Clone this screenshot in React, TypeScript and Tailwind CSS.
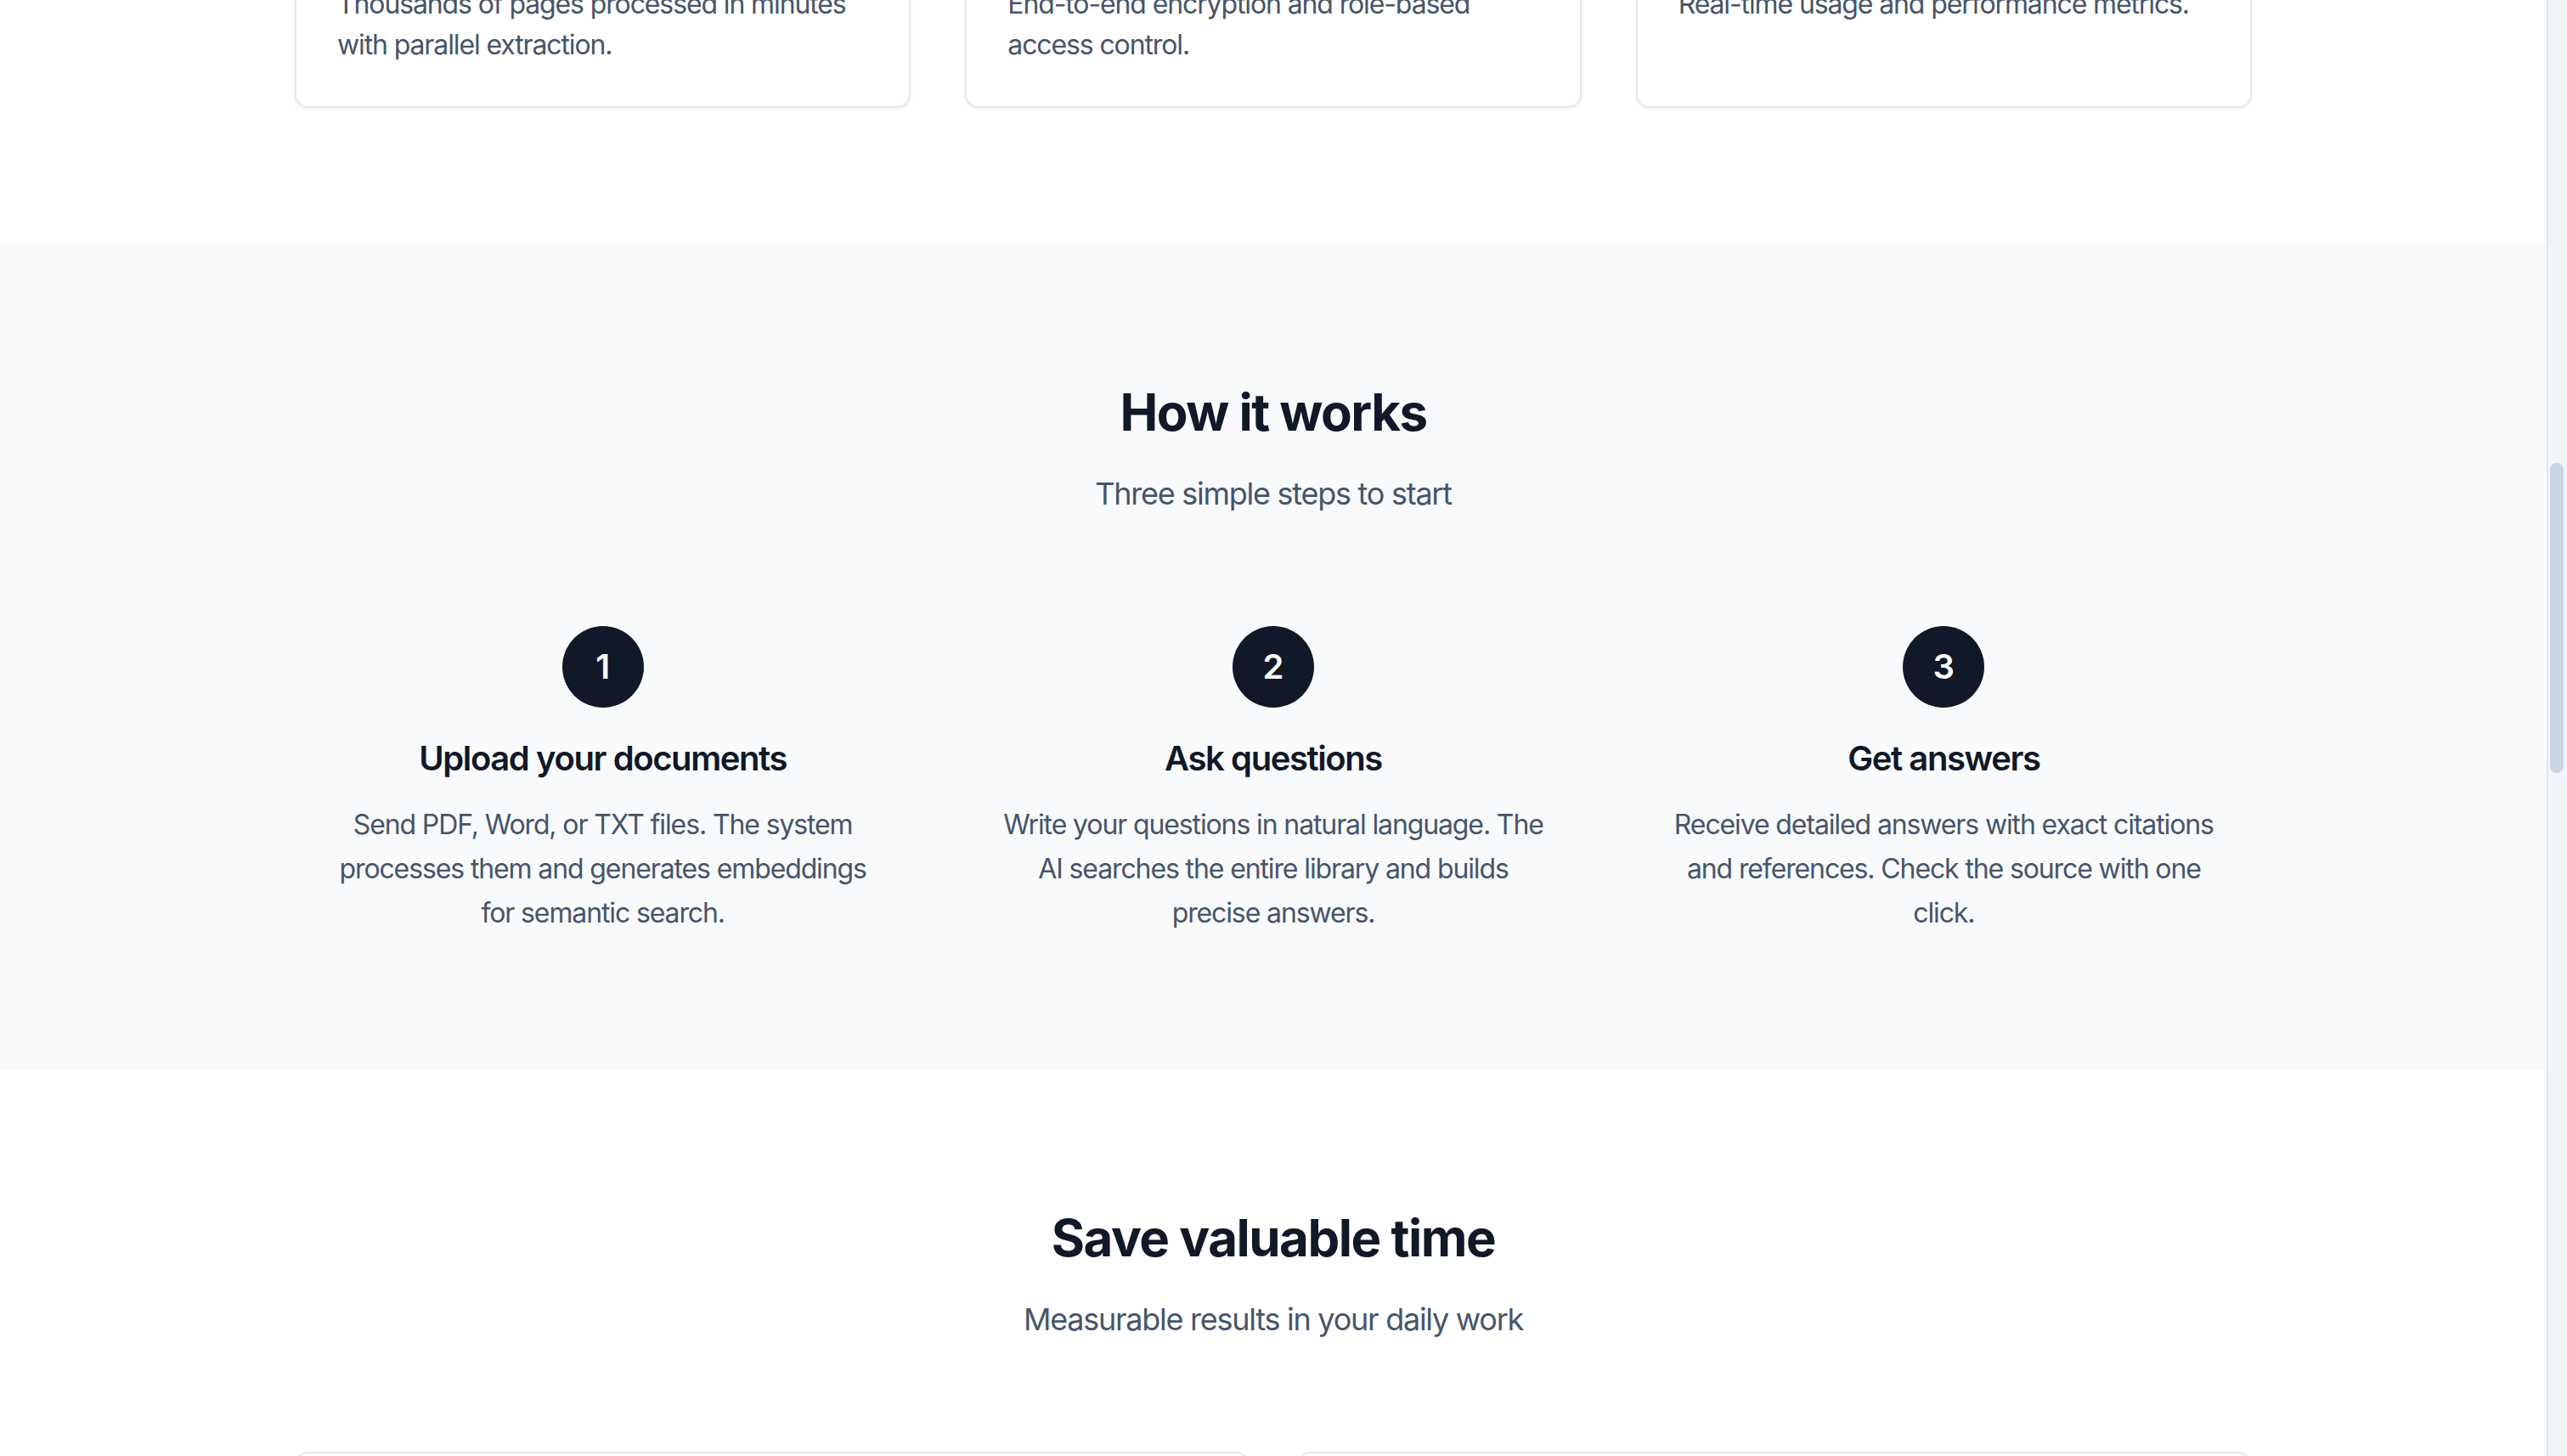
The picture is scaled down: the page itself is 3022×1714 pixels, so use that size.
import React, { useLayoutEffect, useRef } from "react";

const features = [
  {
    title: "Fast processing",
    desc: "Thousands of pages processed in minutes with parallel extraction.",
  },
  {
    title: "Enterprise security",
    desc: "End-to-end encryption and role-based access control.",
  },
  {
    title: "Analytics dashboard",
    desc: "Real-time usage and performance metrics.",
  },
];

const steps = [
  {
    n: "1",
    title: "Upload your documents",
    desc: "Send PDF, Word, or TXT files. The system processes them and generates embeddings for semantic search.",
  },
  {
    n: "2",
    title: "Ask questions",
    desc: "Write your questions in natural language. The AI searches the entire library and builds precise answers.",
  },
  {
    n: "3",
    title: "Get answers",
    desc: "Receive detailed answers with exact citations and references. Check the source with one click.",
  },
];

export default function App() {
  const mainRef = useRef<HTMLElement>(null);
  const howRef = useRef<HTMLElement>(null);

  useLayoutEffect(() => {
    const m = mainRef.current;
    const h = howRef.current;
    if (m && h) {
      m.scrollTop = h.offsetTop - 287;
    }
  }, []);

  return (
    <div className="flex h-screen w-full overflow-hidden bg-white font-['Inter','Noto_Sans',sans-serif] text-[#111827]">
      <main ref={mainRef} className="relative flex-1 overflow-y-hidden">
        {/* Hero */}
        <section className="px-[64px] py-[192px]">
          <div className="mx-auto flex max-w-[2304px] flex-col items-center text-center">
            <h1 className="text-[96px] font-bold leading-[104px] tracking-tight">
              Chat with your documents
            </h1>
            <p className="mt-[48px] max-w-[1400px] text-[40px] leading-[64px] tracking-[-0.035em] text-[#475569]">
              Upload files, ask questions and get precise answers with citations.
            </p>
            <div className="mt-[64px] flex gap-[32px]">
              <div className="rounded-[16px] bg-[#111827] px-[48px] py-[24px] text-[32px] font-semibold text-white">
                Get started
              </div>
              <div className="rounded-[16px] border-[2px] border-[#e5e7eb] px-[48px] py-[24px] text-[32px] font-semibold">
                Learn more
              </div>
            </div>
          </div>
        </section>

        {/* Features */}
        <section className="px-[64px] py-[160px]">
          <div className="mx-auto max-w-[2304px]">
            <div className="text-center">
              <h2 className="text-[60px] font-bold leading-[72px] tracking-tight">Everything you need</h2>
              <p className="mt-[32px] text-[36px] leading-[56px] tracking-[-0.035em] text-[#475569]">
                Powerful features for your team
              </p>
            </div>
            <div className="mt-[128px] grid grid-cols-3 gap-[64px]">
              {features.map((f) => (
                <div
                  key={f.title}
                  className="rounded-[16px] border-[2px] border-[#e5e7eb] bg-white p-[48px] shadow-[0_2px_4px_rgba(15,23,42,0.06)]"
                >
                  <div className="h-[96px] w-[96px] rounded-[16px] bg-[#f1f5f9]" />
                  <h3 className="mt-[32px] text-[36px] font-semibold leading-[56px] tracking-[-0.02em]">{f.title}</h3>
                  <p className="mt-[16px] text-[32px] leading-[48px] tracking-[-0.035em] text-[#475569]">{f.desc}</p>
                </div>
              ))}
            </div>
          </div>
        </section>

        {/* How it works */}
        <section ref={howRef} className="bg-[#f8fafc] px-[64px] pb-[158px] pt-[162px]">
          <div className="mx-auto max-w-[2304px]">
            <div className="text-center">
              <h2 className="text-[60px] font-bold leading-[72px] tracking-tight">How it works</h2>
              <p className="mt-[32px] text-[36px] leading-[56px] tracking-[-0.035em] text-[#475569]">
                Three simple steps to start
              </p>
            </div>
            <div className="mt-[128px] grid grid-cols-3 gap-[64px]">
              {steps.map((s) => (
                <div key={s.n} className="flex flex-col items-center px-[32px] text-center">
                  <div className="flex h-[96px] w-[96px] items-center justify-center rounded-full bg-[#111827] text-[40px] font-semibold text-white">
                    {s.n}
                  </div>
                  <h3 className="mt-[32px] text-[40px] font-semibold leading-[56px] tracking-[-0.035em]">{s.title}</h3>
                  <p className="mt-[24px] text-[32px] leading-[52px] tracking-[-0.035em] text-[#475569]">{s.desc}</p>
                </div>
              ))}
            </div>
          </div>
        </section>

        {/* Save time */}
        <section className="px-[64px] pb-[160px] pt-[162px]">
          <div className="mx-auto max-w-[2304px]">
            <div className="text-center">
              <h2 className="text-[60px] font-bold leading-[72px] tracking-tight">Save valuable time</h2>
              <p className="mt-[32px] text-[36px] leading-[56px] tracking-[-0.035em] text-[#475569]">
                Measurable results in your daily work
              </p>
            </div>
            <div className="mt-[128px] grid grid-cols-2 gap-[56px]">
              <div className="rounded-[16px] border-[2px] border-[#e5e7eb] bg-white p-[64px]">
                <div className="text-[96px] font-bold">80%</div>
                <p className="mt-[16px] text-[32px] tracking-[-0.035em] text-[#475569]">Less time searching for information</p>
              </div>
              <div className="rounded-[16px] border-[2px] border-[#e5e7eb] bg-white p-[64px]">
                <div className="text-[96px] font-bold">10x</div>
                <p className="mt-[16px] text-[32px] tracking-[-0.035em] text-[#475569]">Faster answers to complex questions</p>
              </div>
            </div>
          </div>
        </section>
      </main>

      {/* Scrollbar */}
      <aside className="w-[24px] shrink-0 border-l-[2px] border-[#e5e7eb] bg-[#f1f5f9] pl-[2px] pt-[545px]">
        <div className="h-[365px] w-[16px] rounded-full bg-[#cbd5e1]" />
      </aside>
    </div>
  );
}
